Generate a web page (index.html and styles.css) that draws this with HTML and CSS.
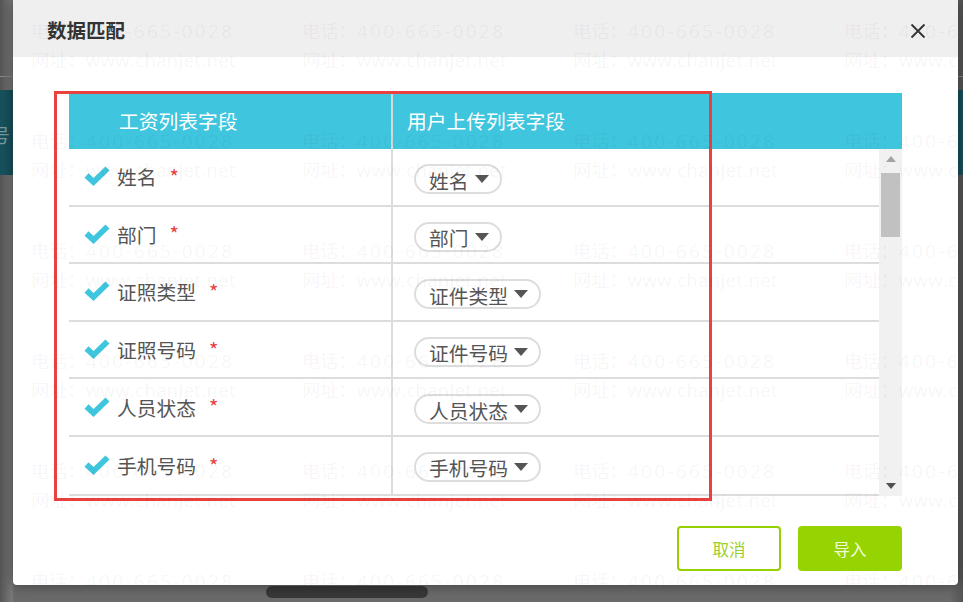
FILE: index.html
```html
<!DOCTYPE html>
<html lang="zh">
<head>
<meta charset="utf-8">
<title>数据匹配</title>
<link rel="stylesheet" href="styles.css">
</head>
<body>
<div class="backdrop">
  <div class="page-line"></div>
  <div class="page-band"><span class="band-left">号</span></div>
  <div class="page-pill"></div>
</div>
<section class="dialog">
  <header class="dialog-head">
    <h1 class="dialog-title">数据匹配</h1>
    <svg class="close" viewBox="0 0 16 16" width="16" height="16"><path d="M1.5 1.5 14.5 14.5M14.5 1.5 1.5 14.5" fill="none" stroke="#333" stroke-width="1.8"/></svg>
  </header>
  <div class="dialog-body">
    <div class="table-head">
      <div class="th th-a">工资列表字段</div>
      <div class="th th-b">用户上传列表字段</div>
    </div>
    <div class="table-wrap">
      <div class="rows">
        <div class="row"><div class="cell-a"><svg class="check" viewBox="0 0 26 20" width="26" height="20"><path d="M2.5 9.5 9.5 16 23.5 2.5" fill="none" stroke="#3fc5dd" stroke-width="5.8"/></svg><span>姓名</span><i class="star">*</i></div><div class="cell-b"><span class="pick">姓名<b class="tri"></b></span></div></div>
        <div class="row"><div class="cell-a"><svg class="check" viewBox="0 0 26 20" width="26" height="20"><path d="M2.5 9.5 9.5 16 23.5 2.5" fill="none" stroke="#3fc5dd" stroke-width="5.8"/></svg><span>部门</span><i class="star">*</i></div><div class="cell-b"><span class="pick">部门<b class="tri"></b></span></div></div>
        <div class="row"><div class="cell-a"><svg class="check" viewBox="0 0 26 20" width="26" height="20"><path d="M2.5 9.5 9.5 16 23.5 2.5" fill="none" stroke="#3fc5dd" stroke-width="5.8"/></svg><span>证照类型</span><i class="star">*</i></div><div class="cell-b"><span class="pick">证件类型<b class="tri"></b></span></div></div>
        <div class="row"><div class="cell-a"><svg class="check" viewBox="0 0 26 20" width="26" height="20"><path d="M2.5 9.5 9.5 16 23.5 2.5" fill="none" stroke="#3fc5dd" stroke-width="5.8"/></svg><span>证照号码</span><i class="star">*</i></div><div class="cell-b"><span class="pick">证件号码<b class="tri"></b></span></div></div>
        <div class="row"><div class="cell-a"><svg class="check" viewBox="0 0 26 20" width="26" height="20"><path d="M2.5 9.5 9.5 16 23.5 2.5" fill="none" stroke="#3fc5dd" stroke-width="5.8"/></svg><span>人员状态</span><i class="star">*</i></div><div class="cell-b"><span class="pick">人员状态<b class="tri"></b></span></div></div>
        <div class="row"><div class="cell-a"><svg class="check" viewBox="0 0 26 20" width="26" height="20"><path d="M2.5 9.5 9.5 16 23.5 2.5" fill="none" stroke="#3fc5dd" stroke-width="5.8"/></svg><span>手机号码</span><i class="star">*</i></div><div class="cell-b"><span class="pick">手机号码<b class="tri"></b></span></div></div>
      </div>
      <div class="scrollbar">
        <b class="arrow-up"></b>
        <div class="thumb"></div>
        <b class="arrow-down"></b>
      </div>
    </div>
    <footer class="actions">
      <button class="btn btn-ghost">取消</button>
      <button class="btn btn-solid">导入</button>
    </footer>
  </div>
  <div class="highlight"></div>
  <div class="watermark">
    <div class="wm"><p>电话：<span class="tel">400-665-0028</span></p><p>网址：<span class="url">www.chanjet.net</span></p></div>
    <div class="wm"><p>电话：<span class="tel">400-665-0028</span></p><p>网址：<span class="url">www.chanjet.net</span></p></div>
    <div class="wm"><p>电话：<span class="tel">400-665-0028</span></p><p>网址：<span class="url">www.chanjet.net</span></p></div>
    <div class="wm"><p>电话：<span class="tel">400-665-0028</span></p><p>网址：<span class="url">www.chanjet.net</span></p></div>
    <div class="wm"><p>电话：<span class="tel">400-665-0028</span></p><p>网址：<span class="url">www.chanjet.net</span></p></div>
    <div class="wm"><p>电话：<span class="tel">400-665-0028</span></p><p>网址：<span class="url">www.chanjet.net</span></p></div>
    <div class="wm"><p>电话：<span class="tel">400-665-0028</span></p><p>网址：<span class="url">www.chanjet.net</span></p></div>
    <div class="wm"><p>电话：<span class="tel">400-665-0028</span></p><p>网址：<span class="url">www.chanjet.net</span></p></div>
    <div class="wm"><p>电话：<span class="tel">400-665-0028</span></p><p>网址：<span class="url">www.chanjet.net</span></p></div>
    <div class="wm"><p>电话：<span class="tel">400-665-0028</span></p><p>网址：<span class="url">www.chanjet.net</span></p></div>
    <div class="wm"><p>电话：<span class="tel">400-665-0028</span></p><p>网址：<span class="url">www.chanjet.net</span></p></div>
    <div class="wm"><p>电话：<span class="tel">400-665-0028</span></p><p>网址：<span class="url">www.chanjet.net</span></p></div>
    <div class="wm"><p>电话：<span class="tel">400-665-0028</span></p><p>网址：<span class="url">www.chanjet.net</span></p></div>
    <div class="wm"><p>电话：<span class="tel">400-665-0028</span></p><p>网址：<span class="url">www.chanjet.net</span></p></div>
    <div class="wm"><p>电话：<span class="tel">400-665-0028</span></p><p>网址：<span class="url">www.chanjet.net</span></p></div>
    <div class="wm"><p>电话：<span class="tel">400-665-0028</span></p><p>网址：<span class="url">www.chanjet.net</span></p></div>
    <div class="wm"><p>电话：<span class="tel">400-665-0028</span></p><p>网址：<span class="url">www.chanjet.net</span></p></div>
    <div class="wm"><p>电话：<span class="tel">400-665-0028</span></p><p>网址：<span class="url">www.chanjet.net</span></p></div>
    <div class="wm"><p>电话：<span class="tel">400-665-0028</span></p><p>网址：<span class="url">www.chanjet.net</span></p></div>
    <div class="wm"><p>电话：<span class="tel">400-665-0028</span></p><p>网址：<span class="url">www.chanjet.net</span></p></div>
    <div class="wm"><p>电话：<span class="tel">400-665-0028</span></p><p>网址：<span class="url">www.chanjet.net</span></p></div>
    <div class="wm"><p>电话：<span class="tel">400-665-0028</span></p><p>网址：<span class="url">www.chanjet.net</span></p></div>
    <div class="wm"><p>电话：<span class="tel">400-665-0028</span></p><p>网址：<span class="url">www.chanjet.net</span></p></div>
    <div class="wm"><p>电话：<span class="tel">400-665-0028</span></p><p>网址：<span class="url">www.chanjet.net</span></p></div>
  </div>
</section>
</body>
</html>
```

FILE: styles.css
```css
* { box-sizing: border-box; }
html, body { margin: 0; height: 100%; }
body {
  width: 963px;
  height: 602px;
  overflow: hidden;
  position: relative;
  background: #5c5c5c;
  font-family: "Noto Sans CJK SC", "Noto Sans", sans-serif;
}
.backdrop {
  position: absolute;
  inset: 0;
  background: linear-gradient(90deg, #555 0, #7a7a7a 12px, #6a6a6a 14px, #6a6a6a 950px, #555 963px);
}
.page-line { position: absolute; left: 0; right: 0; top: 76px; height: 1px; background: #8a8a8a; }
.page-band { position: absolute; left: 0; right: 0; top: 90px; height: 85px; background: #17525d; }
.band-left { position: absolute; left: -9px; top: 31px; font-size: 19px; color: #7c9ca2; }
.page-pill { position: absolute; left: 266px; top: 586px; width: 162px; height: 12px; border-radius: 6px; background: #383838; }

.dialog {
  position: absolute;
  left: 13px;
  top: 0;
  width: 945px;
  height: 585px;
  background: #fff;
  border-radius: 0 0 4px 4px;
  box-shadow: 0 0 14px rgba(0, 0, 0, .45);
  overflow: hidden;
}
.dialog-head {
  height: 57px;
  background: #efefef;
  display: flex;
  align-items: center;
  justify-content: space-between;
  padding: 3px 32px 0 34px;
}
.dialog-title { margin: 0; font-size: 19.5px; line-height: 26px; font-weight: 700; color: #333; }
.close { display: block; margin-top: 1px; }
.dialog-body { padding: 36px 56px 0; }

.table-head { display: flex; height: 56px; background: #3fc5dd; color: #fff; font-size: 19.75px; line-height: 56px; }
.th { height: 100%; }
.th-a { width: 324px; padding-left: 50px; border-right: 2px solid #d9d9d9; }
.th-b { padding-left: 14px; }

.table-wrap { display: flex; height: 347px; border-bottom: 2px solid #ddd; }
.rows { width: 810px; }
.row { display: flex; height: 57.6px; border-bottom: 2px solid #ddd; color: #555; font-size: 19.75px; }
.row:last-child { border-bottom: 0; }
.cell-a {
  width: 324px;
  padding: 0 0 0 15px;
  display: flex;
  align-items: center;
  border-right: 2px solid #ddd;
}
.check { margin-right: 7px; flex: none; margin-top: -1px; }
.star { margin-left: 13px; font-style: normal; color: #e94040; font-size: 20px; line-height: 20px; }
.cell-b { padding: 15px 0 0 21px; }
.pick {
  display: inline-flex;
  align-items: center;
  height: 30px;
  padding: 3px 11px 0 13px;
  border: 2px solid #ddd;
  border-radius: 15px;
  line-height: 24px;
}
.tri { margin: -3px 0 0 6px; border: 7px solid transparent; border-top: 8px solid #555; border-bottom: 0; }

.scrollbar { width: 23px; background: #f1f1f1; display: flex; flex-direction: column; align-items: center; margin-bottom: -2px; }
.arrow-up { margin-top: 7px; border: 5px solid transparent; border-bottom: 6px solid #a3a3a3; border-top: 0; }
.thumb { width: 19px; height: 64px; margin-top: 11px; background: #c1c1c1; }
.arrow-down { margin-top: auto; margin-bottom: 7px; border: 5px solid transparent; border-top: 6px solid #505050; border-bottom: 0; }

.actions { display: flex; justify-content: flex-end; gap: 17px; margin-top: 30px; }
.btn {
  width: 104px;
  height: 45px;
  border-radius: 4px;
  font: 400 16.5px "Noto Sans CJK SC", sans-serif;
  padding: 0;
}
.btn-ghost { background: #fff; border: 2px solid #95d000; color: #9ccf2d; }
.btn-solid { background: #95d400; border: 0; color: #f2fadc; }

.highlight {
  position: absolute;
  left: 41px;
  top: 91px;
  width: 658px;
  height: 410px;
  border: 3px solid #e94040;
  pointer-events: none;
}
.watermark {
  position: absolute;
  left: 18px;
  top: 16px;
  width: 1084px;
  display: grid;
  grid-template-columns: repeat(4, 271px);
  grid-auto-rows: 110px;
  pointer-events: none;
}
.wm { font-size: 18.3px; color: rgba(0, 0, 0, .05); white-space: nowrap; }
.wm p { margin: 0; height: 29px; line-height: 29px; }
.tel { font-family: "Open Sans", sans-serif; font-size: 19px; letter-spacing: 2.3px; }
.url { font-family: "Open Sans", sans-serif; font-size: 18.5px; letter-spacing: .37px; }
```
